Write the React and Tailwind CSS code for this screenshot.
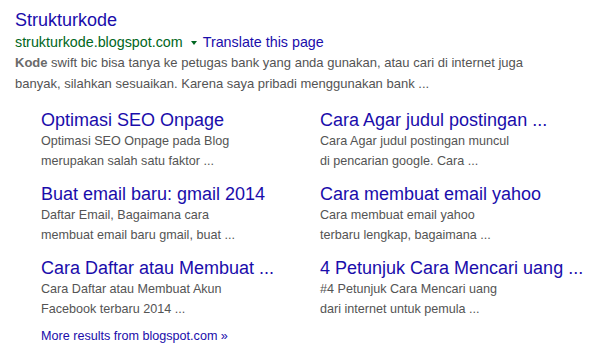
import React from "react";

const links = [
  ["Optimasi SEO Onpage", "Optimasi SEO Onpage pada Blog", "merupakan salah satu faktor ..."],
  ["Cara Agar judul postingan ...", "Cara Agar judul postingan muncul", "di pencarian google. Cara ..."],
  ["Buat email baru: gmail 2014", "Daftar Email, Bagaimana cara", "membuat email baru gmail, buat ..."],
  ["Cara membuat email yahoo", "Cara membuat email yahoo", "terbaru lengkap, bagaimana ..."],
  ["Cara Daftar atau Membuat ...", "Cara Daftar atau Membuat Akun", "Facebook terbaru 2014 ..."],
  ["4 Petunjuk Cara Mencari uang ...", "#4 Petunjuk Cara Mencari uang", "dari internet untuk pemula ..."],
];

export default function App() {
  return (
    <div className="w-[602px] h-[355px] bg-white overflow-hidden pl-[15px] pt-[9px] font-['Arial','Liberation_Sans',sans-serif]">
      <div className="text-[18px] leading-[22px] text-[#1a0dab] whitespace-nowrap">Strukturkode</div>
      <div className="mt-[2px] text-[14.3px] leading-[19px] whitespace-nowrap flex items-center">
        <span className="text-[#006621]">strukturkode.blogspot.com</span>
        <span className="ml-[8px] mr-[6px] inline-block w-0 h-0 border-l-[3px] border-r-[3px] border-t-[4px] border-l-transparent border-r-transparent border-t-[#006621]" />
        <span className="text-[#1a0dab]">Translate this page</span>
      </div>
      <div className="text-[13px] leading-[21px] text-[#545454] w-[580px]">
        <div className="whitespace-nowrap"><b className="text-[#6a6a6a]">Kode</b> swift bic bisa tanya ke petugas bank yang anda gunakan, atau cari di internet juga</div>
        <div className="whitespace-nowrap">banyak, silahkan sesuaikan. Karena saya pribadi menggunakan bank ...</div>
      </div>
      <div className="pl-[26px] mt-[15px]">
        <div className="grid grid-cols-[279px_279px] gap-y-[12px]">
          {links.map((l, i) => (
            <div key={i}>
              <div className="text-[18px] leading-[22px] text-[#1a0dab] whitespace-nowrap">{l[0]}</div>
              <div className="text-[12.6px] leading-[20px] text-[#545454] whitespace-nowrap">{l[1]}</div>
              <div className="text-[12.6px] leading-[20px] text-[#545454] whitespace-nowrap">{l[2]}</div>
            </div>
          ))}
        </div>
        <div className="mt-[7px] text-[12.6px] leading-[20px] text-[#1a0dab] whitespace-nowrap">More results from blogspot.com »</div>
      </div>
    </div>
  );
}
